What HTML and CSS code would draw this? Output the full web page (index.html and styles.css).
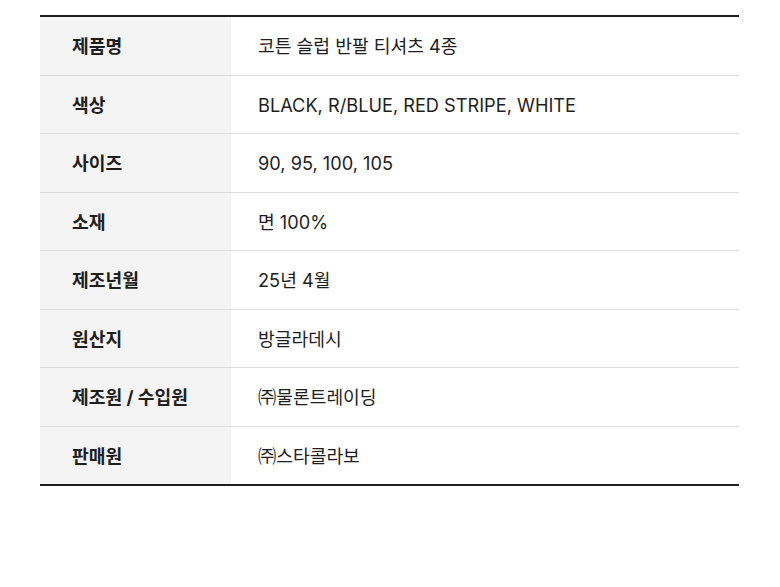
FILE: index.html
```html
<!DOCTYPE html>
<html lang="ko">
<head>
<meta charset="utf-8">
<link rel="stylesheet" href="styles.css">
</head>
<body>
<div class="wrap">
<table class="spec">
<tbody>
<tr><th>제품명</th><td>코튼 슬럽 반팔 티셔츠 4종</td></tr>
<tr><th>색상</th><td>BLACK, R/BLUE, RED STRIPE, WHITE</td></tr>
<tr><th>사이즈</th><td>90, 95, 100, 105</td></tr>
<tr><th>소재</th><td>면 100%</td></tr>
<tr><th>제조년월</th><td>25년 4월</td></tr>
<tr><th>원산지</th><td>방글라데시</td></tr>
<tr><th>제조원 / 수입원</th><td>㈜물론트레이딩</td></tr>
<tr><th>판매원</th><td>㈜스타콜라보</td></tr>
</tbody>
</table>
</div>
</body>
</html>
```
FILE: styles.css
```css
html, body {
  margin: 0;
  padding: 0;
  background: #fff;
}
body {
  font-family: Inter, "Noto Sans CJK KR", sans-serif;
  color: #1e1e1e;
}
.wrap {
  padding: 15px 41px 0 40px;
}
.spec {
  width: 699px;
  border-collapse: collapse;
  border-top: 2px solid #1e1e1e;
  border-bottom: 2px solid #1e1e1e;
}
.spec th,
.spec td {
  height: 56.5px;
  padding: 1px 0 0;
  border-bottom: 1px solid #dcdcdc;
  font-size: 18.2px;
  line-height: 24px;
  text-align: left;
  vertical-align: middle;
}
.spec tr:last-child th,
.spec tr:last-child td {
  border-bottom: none;
}
.spec th {
  width: 159px;
  padding-left: 32px;
  background: #f4f4f4;
  font-weight: 700;
}
.spec td {
  padding-left: 27px;
  font-weight: 400;
}
```
